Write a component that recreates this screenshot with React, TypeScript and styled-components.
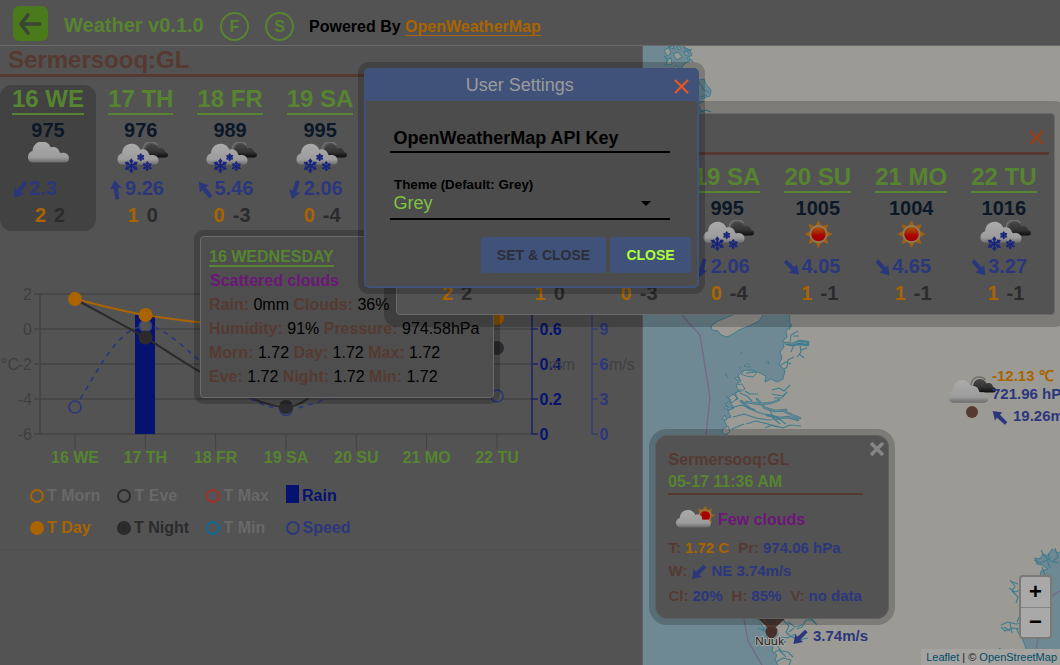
import React from 'react';
import styled, { createGlobalStyle } from 'styled-components';

const c = {
  bg: '#535353',
  line: '#6a6a6a',
  green: '#578430',
  brown: '#563a32',
  navy: '#2b377c',
  deep: '#051270',
  orange: '#a96400',
  dark: '#2b2b2d',
  purple: '#6d1679',
  blue: '#40527a',
  sea: '#6e8993',
  land: '#9c9a95',
  coast: '#3f7d8d',
};

const Global = createGlobalStyle`
  * { box-sizing: border-box; }
  body { margin: 0; background: ${c.bg}; overflow: hidden; font-family: "Liberation Sans", Arial, sans-serif; }
`;

const Page = styled.div`
  position: relative;
  width: 1060px;
  height: 665px;
  display: flex;
  flex-direction: column;
  overflow: hidden;
`;
const Header = styled.header`
  height: 46px;
  flex: none;
  display: flex;
  align-items: center;
  padding: 2px 12px 0 13px;
  border-bottom: 1px solid ${c.line};
  font-weight: bold;
`;
const BackButton = styled.div`
  width: 35px;
  height: 35px;
  border-radius: 6px;
  background: #4b7a1c;
  margin-right: 16px;
  svg { display: block; }
`;
const Brand = styled.div`
  font-size: 20px;
  line-height: 24px;
  padding-top: 2px;
  color: ${c.green};
  width: 156px;
`;
const RoundButton = styled.div`
  width: 29px;
  height: 29px;
  margin: 6px 16px 0 0;
  border: 2px solid ${c.green};
  border-radius: 50%;
  color: ${c.green};
  font-size: 16px;
  line-height: 25px;
  text-align: center;
`;
const Powered = styled.div`
  font-size: 16px;
  line-height: 20px;
  padding-top: 7px;
  margin-left: -1px;
  color: #000;
`;
const PoweredLink = styled.span`
  color: ${c.orange};
  border-bottom: 1px solid ${c.orange};
  line-height: 17px;
  display: inline-block;
`;
const Body = styled.main`
  flex: 1;
  display: grid;
  grid-template-columns: 643px 1fr;
  min-height: 0;
`;
const Left = styled.section`
  border-right: 1px solid #606060;
  display: flex;
  flex-direction: column;
  min-width: 0;
`;
const CityTitle = styled.div`
  height: 31px;
  border-bottom: 3px solid ${c.brown};
  padding-left: 8px;
  color: ${c.brown};
  font-size: 24px;
  line-height: 28px;
  font-weight: bold;
`;
const DayRow = styled.div`
  display: flex;
  margin-top: 8px;
  flex: none;
`;
const DayCell = styled.div<{ $active?: boolean }>`
  padding: 0 12px;
  height: 146px;
  flex: none;
  display: flex;
  flex-direction: column;
  font-weight: bold;
  font-size: 20px;
  line-height: 23px;
  border-radius: 12px;
  background: ${(p) => (p.$active ? '#424242' : 'transparent')};
`;
const DayName = styled.div`
  font-size: 24px;
  line-height: 28px;
  color: ${c.green};
  border-bottom: 2px solid ${c.green};
`;
const Pressure = styled.div`
  margin-top: 4px;
  text-align: center;
  color: #0a1827;
`;
const IconBox = styled.div`
  height: 35px;
  display: flex;
  justify-content: center;
  svg { display: block; flex: none; }
`;
const Wind = styled.div`
  display: flex;
  color: ${c.navy};
  svg { flex: none; overflow: visible; }
`;
const Temps = styled.div`
  margin-top: 4px;
  padding-left: 4px;
  display: flex;
  justify-content: center;
  gap: 8px;
`;
const TempDay = styled.span`color: ${c.orange};`;
const TempNight = styled.span`color: ${c.dark};`;

const ChartArea = styled.div`
  margin-top: 5px;
  height: 314px;
  border-bottom: 1px solid #4e4e4e;
  svg { display: block; }
`;
const MapArea = styled.section`
  position: relative;
  overflow: hidden;
  background: ${c.land};
`;
const MapSvg = styled.svg`
  position: absolute;
  left: 0;
  top: 0;
`;
const StationLabel = styled.div<{ $x: number; $y: number }>`
  position: absolute;
  left: ${(p) => p.$x}px;
  top: ${(p) => p.$y}px;
  white-space: nowrap;
  font-weight: bold;
  font-size: 15px;
  line-height: 18px;
  color: ${c.navy};
`;
const StationTemp = styled.div`color: ${c.orange};`;
const StationWind = styled.div`
  display: flex;
  gap: 5px;
  margin-top: 4px;
  svg { overflow: visible; }
`;
const ZoomControl = styled.div`
  position: absolute;
  right: 8px;
  bottom: 26px;
  width: 33px;
  height: 64px;
  border: 2px solid #7b7976;
  border-radius: 4px;
  background: #a9a9a9;
`;
const ZoomButton = styled.div`
  height: 30px;
  font: bold 22px/30px "Liberation Sans", sans-serif;
  text-align: center;
  color: #000;
  & + & { border-top: 1px solid #858585; line-height: 28px; }
`;
const Attribution = styled.div`
  position: absolute;
  right: 0;
  bottom: 0;
  padding: 0 3px 0 5px;
  height: 16px;
  font-size: 11px;
  line-height: 17px;
  color: #222;
  background: #a4a3a0;
  white-space: nowrap;
  span { color: #024d69; }
`;
const Popup = styled.div`
  position: absolute;
  left: 12px;
  top: 389px;
  width: 234px;
  height: 184px;
  border-radius: 12px;
  border: 1px solid #5f5f5f;
  background: ${c.bg};
  box-shadow: 0 0 0 6px rgba(0, 0, 0, 0.2);
  padding: 13px 25px 0 12px;
  font-weight: bold;
  font-size: 15px;
  line-height: 18px;
  color: ${c.brown};
  white-space: nowrap;
`;
const PopupClose = styled.svg`
  position: absolute;
  right: 3px;
  top: 5px;
`;
const PopupTitle = styled.div`
  font-size: 16px;
  line-height: 22px;
  padding-left: 0.5px;
`;
const PopupTime = styled.div`
  font-size: 16px;
  line-height: 22px;
  height: 24px;
  color: ${c.green};
  border-bottom: 2px solid ${c.brown};
`;
const PopupSky = styled.div`
  display: flex;
  align-items: center;
  height: 35px;
  margin: 7px 0 2px;
  padding-left: 6px;
  gap: 2px;
  font-size: 16px;
  color: ${c.purple};
`;
const PopupLine = styled.div<{ $h: number }>`
  display: flex;
  height: ${(p) => p.$h}px;
  padding-left: 0.5px;
  gap: 4px;
  svg { overflow: visible; }
`;
const Val = styled.span<{ $warm?: boolean }>`
  color: ${(p) => (p.$warm ? c.orange : c.navy)};
  margin-right: 5px;
`;

const Tooltip = styled.div`
  position: absolute;
  left: 200px;
  top: 236px;
  width: 294px;
  height: 162px;
  border: 1px solid ${c.line};
  border-radius: 4px;
  background: #4e4e4e;
  box-shadow: 0 0 0 6px rgba(0, 0, 0, 0.2);
  padding: 9px 0 0 8px;
  font-size: 16px;
  line-height: 24px;
  color: #000;
  white-space: nowrap;
  b { color: ${c.brown}; }
`;
const TooltipTitle = styled.div`
  width: fit-content;
  height: 21px;
  line-height: 21px;
  font-weight: bold;
  color: ${c.green};
  border-bottom: 2px solid ${c.green};
`;
const TooltipSky = styled.div`
  padding: 2px 0 0 1px;
  height: 26px;
  font-weight: bold;
  color: ${c.purple};
`;

const Panel = styled.div`
  position: absolute;
  left: 396px;
  top: 113px;
  width: 659px;
  height: 202px;
  border: 1px solid ${c.line};
  border-radius: 4px;
  background: ${c.bg};
  box-shadow: 0 0 0 12px rgba(0, 0, 0, 0.2);
  padding: 10px 5px 0 10px;
`;
const PanelClose = styled.svg`
  position: absolute;
  right: 10px;
  top: 15.500px;
`;

const Dialog = styled.div`
  position: absolute;
  left: 364px;
  top: 68px;
  width: 335px;
  height: 220px;
  border: 2px solid ${c.blue};
  border-radius: 5px;
  background: #4c4c4c;
  box-shadow: 0 0 0 6px rgba(0, 0, 0, 0.2);
  display: flex;
  flex-direction: column;
`;
const DialogHead = styled.div`
  height: 31px;
  background: ${c.blue};
  display: flex;
  align-items: center;
  color: #9b9b9b;
  font-size: 18px;
  line-height: 28px;
  padding: 0 8.500px 0 0;
  svg { margin-top: 1px; }
`;
const DialogTitle = styled.div`
  flex: 1;
  text-align: center;
  padding-bottom: 2px;
`;
const DialogBody = styled.div`
  padding: 24px 27px 0 24px;
  flex: 1;
`;
const KeyField = styled.div`
  height: 28px;
  padding-left: 3.500px;
  border-bottom: 2px solid #000;
  font-size: 18px;
  line-height: 26px;
  font-weight: bold;
`;
const SelectLabel = styled.div`
  margin-top: 24px;
  padding-left: 4px;
  font-size: 13.33px;
  line-height: 16px;
  font-weight: bold;
`;
const SelectBox = styled.div`
  height: 27px;
  padding: 0 19px 5px 3.500px;
  border-bottom: 2px solid #000;
  display: flex;
  align-items: center;
  justify-content: space-between;
  font-size: 18px;
  line-height: 20px;
  color: #7fc241;
`;
const Caret = styled.span`
  border: 5px solid transparent;
  border-top-color: #000;
  border-bottom: 0;
`;
const DialogActions = styled.div`
  display: flex;
  justify-content: flex-end;
  gap: 4px;
  padding: 0 6px 13px 0;
`;
const Button = styled.div<{ $w: number; $on?: boolean }>`
  width: ${(p) => p.$w}px;
  height: 36px;
  border-radius: 2px;
  background: ${c.blue};
  color: ${(p) => (p.$on ? '#adff2f' : '#2b2f38')};
  font-weight: bold;
  font-size: 14px;
  line-height: 36px;
  text-align: center;
`;

const Arrow = ({ dir, w = 17, h = 23, scale = 1 }: { dir: number; w?: number; h?: number; scale?: number }) => (
  <svg width={w} height={h} viewBox={`${-w / 2} ${-h / 2} ${w} ${h}`}>
    <path
      transform={`translate(-0.500 1.300) rotate(${dir}) scale(${scale})`}
      d="M0-9.800L5.800-1.200L2.200-1.500L1.900 9.500H-1.900L-2.200-1.500L-5.800-1.200Z"
      fill={c.navy}
    />
  </svg>
);

const IconDefs = () => (
  <svg width="0" height="0" style={{ position: 'absolute' }}>
    <defs>
      <linearGradient id="cloud" x1="0" y1="0" x2="0" y2="1">
        <stop offset="0" stopColor="#aaaaaa" />
        <stop offset="0.75" stopColor="#9c9c9c" />
        <stop offset="1" stopColor="#6b6b6b" />
      </linearGradient>
      <linearGradient id="night" x1="0" y1="0" x2="0" y2="1">
        <stop offset="0" stopColor="#474747" />
        <stop offset="0.6" stopColor="#333" />
        <stop offset="1" stopColor="#0c0c0c" />
      </linearGradient>
      <linearGradient id="core" x1="0" y1="0" x2="0" y2="1">
        <stop offset="0" stopColor="#a85a08" />
        <stop offset="0.45" stopColor="#a51f05" />
        <stop offset="0.6" stopColor="#aa0303" />
        <stop offset="1" stopColor="#a00000" />
      </linearGradient>
    </defs>
  </svg>
);

const cloudPath =
  'M5 21C1.500 21 0 18.500 0 15.500C0 12 2 10 4.500 9.500C5 3.500 9 0 14 0C18.500 0 21.500 2.500 22.800 6C27 4.500 31 7 31.500 10.500C32 11 32.500 11.400 33 11.500C37.500 10.500 41 13 41 16.500C41 19.500 39.500 21 36.500 21Z';

const Flake = ({ x, y, r, w }: { x: number; y: number; r: number; w: number }) => (
  <g transform={`translate(${x} ${y})`} stroke="#1a257c" strokeWidth={w} strokeLinecap="round">
    {[0, 60, 120].map((a) => (
      <path
        key={a}
        transform={`rotate(${a})`}
        fill="none"
        d={`M0 ${-r}V${r}M${-r * 0.18} ${-r * 0.75}L0 ${-r * 0.5}L${r * 0.18} ${-r * 0.75}M${-r * 0.18} ${r * 0.75}L0 ${r * 0.5}L${r * 0.18} ${r * 0.75}`}
      />
    ))}
  </g>
);

const Sun = ({ x, y, s = 1 }: { x: number; y: number; s?: number }) => (
  <g transform={`translate(${x} ${y}) scale(${s})`}>
    {[0, 45, 90, 135, 180, 225, 270, 315].map((a) => (
      <path key={a} transform={`rotate(${a})`} d="M-2.900-8.500L0-14L2.900-8.500Z" fill="#a06010" />
    ))}
    <circle r="9.200" fill="#93703a" />
    <circle r="8.500" fill="#8f806a" />
    <circle r="7.300" fill="url(#core)" />
  </g>
);

const NightCloud = ({ x, y }: { x: number; y: number }) => (
  <g transform={`translate(${x} ${y})`}>
    <path d="M0 8C0 3 4 0 8 0C11 0 13 1 14.500 3" fill="none" stroke="#707070" strokeWidth="1.500" />
    <path
      d="M3 14C1 10 2 3 8 2C12 1.500 14.500 4 15.500 6.500C19 5 22 7.500 22 10C26 10.500 26 15.500 22 15.500H6Z"
      fill="url(#night)"
    />
  </g>
);

type Sky = 'cloud' | 'snow' | 'sun';
const SkyIcon = ({ kind }: { kind: Sky }) => (
  <svg width="58" height="35" viewBox="-29 0 58 35">
    {kind === 'cloud' && <path transform="translate(-20 -0.500)" d={cloudPath} fill="url(#cloud)" />}
    {kind === 'snow' && (
      <>
        <NightCloud x={2} y={0} />
        <path transform="translate(-23.500 1.800)" d={cloudPath} fill="url(#cloud)" />
        <Flake x={-9.7} y={23.8} r={6.4} w={1.8} />
        <Flake x={-0.3} y={15.3} r={3.2} w={1.5} />
        <Flake x={6.3} y={24.2} r={4.3} w={1.5} />
      </>
    )}
    {kind === 'sun' && <Sun x={0.5} y={14} />}
  </svg>
);

interface Day { name: string; p: number; sky: Sky; dir: number; wind: string; hi: string; lo: string }
const days: Day[] = [
  { name: '16 WE', p: 975, sky: 'cloud', dir: 217, wind: '2.3', hi: '2', lo: '2' },
  { name: '17 TH', p: 976, sky: 'snow', dir: -8, wind: '9.26', hi: '1', lo: '0' },
  { name: '18 FR', p: 989, sky: 'snow', dir: -38, wind: '5.46', hi: '0', lo: '-3' },
  { name: '19 SA', p: 995, sky: 'snow', dir: 197, wind: '2.06', hi: '0', lo: '-4' },
  { name: '20 SU', p: 1005, sky: 'sun', dir: 134, wind: '4.05', hi: '1', lo: '-1' },
  { name: '21 MO', p: 1004, sky: 'sun', dir: 140, wind: '4.65', hi: '1', lo: '-1' },
  { name: '22 TU', p: 1016, sky: 'snow', dir: 140, wind: '3.27', hi: '1', lo: '-1' },
];

const Days = ({ items, active }: { items: Day[]; active?: number }) => (
  <DayRow>
    {items.map((d, i) => (
      <DayCell key={d.name} $active={i === active}>
        <DayName>{d.name}</DayName>
        <Pressure>{d.p}</Pressure>
        <IconBox><SkyIcon kind={d.sky} /></IconBox>
        <Wind><Arrow dir={d.dir} />{d.wind}</Wind>
        <Temps><TempDay>{d.hi}</TempDay><TempNight>{d.lo}</TempNight></Temps>
      </DayCell>
    ))}
  </DayRow>
);

const xs = [75, 145.3, 215.6, 286, 356.3, 426.6, 497];

const Chart = () => (
  <svg width="642" height="313" viewBox="0 236 642 313" fontSize="16">
    <g stroke="#434343" strokeWidth="1.500">
      {[294, 329, 364, 399, 434].map((y) => <path key={y} d={`M34 ${y}H532`} />)}
      <path d="M40 294V434" />
      {xs.map((x) => <path key={x} d={`M${x} 434V450`} strokeWidth="1" />)}
    </g>
    <g fill="#3f3f3f" textAnchor="end">
      {['2', '0', '-2', '-4', '-6'].map((t, i) => <text key={t} x="32" y={299.5 + i * 35}>{t}</text>)}
      <text x="19" y="370">°C</text>
    </g>
    <g fill={c.green} fontWeight="bold" textAnchor="middle">
      {days.map((d, i) => <text key={d.name} x={xs[i]} y="463">{d.name}</text>)}
    </g>
    <rect x="135" y="315" width="20" height="119" fill={c.deep} />
    <g fill="none" strokeWidth="2">
      <path d="M75 299C100 305 120 311 145 315C170 319 200 323 230 325C320 331 420 322 497 318" stroke={c.orange} />
      <path d="M75 299L145 337C180 360 250 407 286 407C312 407 330 370 360 355C420 335 440 352 497 348" stroke={c.dark} />
      <path d="M75 407C95 378 115 328 145 326C175 322 230 409 286 409C340 409 430 320 497 396" stroke={c.navy} strokeDasharray="5 5" strokeWidth="1.700" />
    </g>
    <g fill={c.bg} stroke={c.navy} strokeWidth="1.700">
      <circle cx="75" cy="407" r="6" />
      <circle cx="286" cy="409.500" r="6" />
      <circle cx="497" cy="396" r="6" />
      <circle cx="145.500" cy="326" r="6" stroke="#34437f" />
    </g>
    <g fill={c.dark}>
      <circle cx="145.500" cy="337.500" r="7" />
      <circle cx="286" cy="407" r="7" />
      <circle cx="497" cy="348" r="7" />
    </g>
    <g fill={c.orange}>
      <circle cx="75" cy="299" r="7" />
      <circle cx="145.500" cy="315" r="7" />
      <circle cx="497" cy="318" r="7" />
    </g>
    <path d="M538 329H532M538 364H532M538 399H532M538 434H532V294" fill="none" stroke="#1c2463" strokeWidth="1.500" />
    <path d="M598 329H592M598 364H592M598 399H592M598 434H592V294" fill="none" stroke="#343d70" strokeWidth="1.500" />
    <g fontWeight="bold" fill={c.deep}>
      {['0.6', '0.4', '0.2', '0'].map((t, i) => <text key={t} x="539.500" y={335 + i * 35}>{t}</text>)}
    </g>
    <g fontWeight="bold" fill={c.navy}>
      {['9', '6', '3', '0'].map((t, i) => <text key={t} x="599.500" y={335 + i * 35}>{t}</text>)}
    </g>
    <text x="548.500" y="370" fill="#414141">mm</text>
    <text x="609" y="370" fill="#414141">m/s</text>
    <g fontWeight="bold">
      <g strokeWidth="2" fill="none">
        <circle cx="37" cy="496" r="6" stroke={c.orange} />
        <circle cx="124" cy="496" r="6" stroke={c.dark} />
        <circle cx="213" cy="496" r="6" stroke="#a0302a" />
        <circle cx="213" cy="528" r="6" stroke="#106c94" />
        <circle cx="293" cy="528" r="6" stroke={c.navy} />
      </g>
      <circle cx="37" cy="528" r="7" fill={c.orange} />
      <circle cx="124" cy="528" r="7" fill={c.dark} />
      <rect x="286" y="485" width="13" height="18" fill={c.deep} />
      <g fill="#686868">
        <text x="47" y="501">T Morn</text>
        <text x="134.500" y="501">T Eve</text>
        <text x="223.500" y="501">T Max</text>
        <text x="223.500" y="533">T Min</text>
      </g>
      <text x="302" y="501" fill={c.deep}>Rain</text>
      <text x="47" y="533" fill={c.orange}>T Day</text>
      <text x="134" y="533" fill={c.dark}>T Night</text>
      <text x="302.500" y="533" fill={c.navy}>Speed</text>
    </g>
  </svg>
);

const MapDrawing = () => (
  <MapSvg width="417" height="619" viewBox="643 46 417 619">
    <g fill={c.sea} stroke={c.coast} strokeWidth="1" strokeLinejoin="round">
      <path d="M640 40H682L684 47L690 50L692 55L687 58L690 61L684 64L681 69L676 66L672 70L674 76L686 78L693 76L699 80L704 79L706 84L711 90L710 96L704 98L698 103L700 109L704 112V250L780 270L789 300L790 326L786 331L787 337L783 341L784 347L780 352L782 358L779 364L785 371L783 379L777 382L771 379L765 382L766 376L758 372L752 370L742 371L738 376L741 381L736 385L741 390L735 393L738 399L730 402L734 408L728 411L731 417L724 419L727 427L722 431L729 436L740 450V600L757 619L762 625L766 632L768 641L773 646L772 651L777 655L775 660L780 668H640Z" />
      <path d="M1064 549L1058 553L1052 549L1048 556L1043 554L1040 559L1035 558L1037 564L1042 565L1048 569L1041 571L1040 577L1046 580V630L1030 634L1022 638L1026 648L1024 670H1064Z" />
      <path d="M753 314L760 318L768 314L776 318L786 314L788 325L770 330Z" stroke="none" />
    </g>
    <path d="M711 326L718 321L740 312H765L759 321L749 326L739 330L733 334L727 337L721 335L718 331L712 330Z" fill={c.land} stroke={c.coast} />
    <g fill={c.land} stroke={c.coast} strokeWidth="1">
      <path d="M664 50L669 48L671 53L667 56ZM673 54L678 52L682 57L677 60ZM666 60L671 58L672 64L667 65ZM676 45L681 48L679 50ZM684 51L689 53L686 56ZM668 47L673 46L674 49Z" />
      <path d="M741 374L745 370L752 371L757 373L753 377L746 376ZM736 385L742 384L745 389L739 392ZM728 398L733 394L737 398L732 403ZM722 419L725 415L727 420ZM722 430L728 426L730 432L724 435ZM766 362L768 361L769 364ZM735 378L739 377L738 381ZM724 408L727 406L728 410ZM744 366L748 364L750 367Z" strokeWidth="0.900" />
    </g>
    <g fill="none" stroke={c.coast} strokeWidth="2.400" strokeLinejoin="round" strokeLinecap="round">
      <path d="M785 343L793 344L799 341L808 342V345L800 344L792 345L786 344" />
      <path d="M741 401L749 408L754 410M757 399L765 408L775 411L786 410M746 402L760 404L771 403L779 400M784 411L792 415L800 418M767 415L780 418L788 417L798 420" />
    </g>
    <g fill="none" stroke={c.sea} strokeWidth="1" strokeLinejoin="round" strokeLinecap="round">
      <path d="M780 343L793 344L799 342L807 343" />
      <path d="M741 401L749 408L754 410M757 399L765 408L775 411L786 410M746 402L760 404L771 403L779 400M784 411L792 415L800 418M767 415L780 418L788 417L798 420" />
    </g>
    <g fill="none" stroke={c.coast} strokeWidth="1.100" strokeLinejoin="round">
      <path d="M790 342L791 335L798 331M793 336L799 336M794 345L791 352M800 345L801 352L797 357M801 350L807 348M799 354L804 358M789 330L792 324M781 365L786 362L791 364M783 370L787 367L788 360L794 357" />
      <path d="M772 390L779 388L784 391L790 385M772 394L783 396L787 392L782 398L774 398" />
      <path d="M740 393L747 396L752 401M731 408L741 405L750 408L757 412L767 415L779 418M733 417L744 414L756 418L768 420L779 419L786 424M746 424L756 421L768 424L777 427M765 428L772 425L783 428L790 425L801 426M732 429L744 424M770 410L773 418L780 424M745 391L750 394L758 394" />
      <path d="M746 373L757 372M741 389L735 394M739 367L741 370M725 373L728 378M741 352L742 354M726 396L731 400L725 404L729 408" strokeWidth="1" />
      <path d="M788 622L795 627L802 625M783 620L789 626L786 632L790 636L799 640L808 638M789 632L794 628M774 641L782 637L787 638L796 634M797 629L802 627L806 620L813 620L817 625M764 620L768 626L763 629L769 636M786 641L780 645L776 643M770 642L777 645L781 651L788 652L793 657M773 653L779 650L786 657M776 662L783 658L791 660L789 665M758 628L765 631M779 633L774 639M809 617L816 624" />
      <path d="M1055 548L1058 557L1052 562L1044 556L1041 550M1034 560L1041 563L1047 560L1050 568M1048 553L1050 561L1059 563M1042 567L1045 575M1010 580L1015 586L1012 591L1018 597L1016 603M1009 588L1015 592L1020 590M1010 581L1018 584M1001 625L1008 622L1016 624L1023 623L1020 629L1013 628L1005 631L1001 627M1010 623L1012 633M1017 622L1020 615M1016 628L1019 634M1004 627L1010 631M999 648L1004 652M998 658L1010 657L1016 650" />
      <path d="M699 82L704 90L709 92M700 97L707 95M698 104L704 101M700 112L706 110L711 112M689 58L693 62M664 56L668 60L665 66M684 47L687 51L692 49" />
    </g>
    <g fill="none" stroke="#77668a" strokeWidth="1.300">
      <path d="M680 312L688 322L700 335L710 398L706 434V520L744 619L748 641L762 665" />
      <path d="M1040 625L1038 638L1036 652M1050 597L1060 591" />
    </g>
    <circle cx="972" cy="412" r="6" fill={c.brown} />
    <g transform="translate(972 376)"><NightCloud x={-1} y={1} /></g>
    <path transform="translate(948.500 380) scale(0.970 1.080)" d={cloudPath} fill="url(#cloud)" />
    <path d="M756 617H787L771.500 631Z" fill="#403a38" />
    <path d="M761 617L771.500 628L782 617" fill="none" stroke={c.brown} strokeWidth="2.500" />
    <path d="M771.500 639C767 637 765.500 634 765.500 630C767 626 770 627 771.500 628C773 627 776 626 777.500 630C777.500 634 776 637 771.500 639Z" fill="#48302a" />
    <text x="755" y="645" fontFamily="Noto Sans, sans-serif" fontSize="11.500" fill="#202020" stroke="#a8a6a2" strokeWidth="2" paintOrder="stroke" strokeLinejoin="round">Nuuk</text>
  </MapSvg>
);

const Cross = ({ color }: { color: string }) => <path d="M1 1L14 14M14 1L1 14" stroke={color} strokeWidth="2" fill="none" />;

export default function App() {
  return (
    <Page>
      <Global />
      <IconDefs />
      <Header>
        <BackButton>
          <svg width="35" height="35" viewBox="0 0 35 35" fill="none" stroke="#3b4537" strokeWidth="3.600" strokeLinecap="round" strokeLinejoin="round">
            <path d="M26.500 18H8M15 9L8 18L15 27" />
          </svg>
        </BackButton>
        <Brand>Weather v0.1.0</Brand>
        <RoundButton>F</RoundButton>
        <RoundButton>S</RoundButton>
        <Powered>Powered By <PoweredLink>OpenWeatherMap</PoweredLink></Powered>
      </Header>
      <Body>
        <Left>
          <CityTitle>Sermersooq:GL</CityTitle>
          <Days items={days.slice(0, 4)} active={0} />
          <ChartArea><Chart /></ChartArea>
        </Left>
        <MapArea>
          <MapDrawing />
          <StationLabel $x={349} $y={321}>
            <StationTemp>-12.13 ℃</StationTemp>
            <div>721.96 hPa</div>
            <StationWind><Arrow dir={-47} w={16} h={18} scale={0.95} />19.26m/s</StationWind>
          </StationLabel>
          <StationLabel $x={150} $y={577}>
            <StationWind><Arrow dir={225} w={15} h={18} scale={0.95} />3.74m/s</StationWind>
          </StationLabel>
          <Popup>
            <PopupClose width="16" height="16" viewBox="0 0 16 16">
              <path d="M2 2L14 14M14 2L2 14" stroke="#858585" strokeWidth="3.500" />
            </PopupClose>
            <PopupTitle>Sermersooq:GL</PopupTitle>
            <PopupTime>05-17 11:36 AM</PopupTime>
            <PopupSky>
              <svg width="42" height="30" viewBox="0 0 42 30">
                <Sun x={31} y={10.5} s={0.72} />
                <path transform="translate(2 5) scale(0.850 0.830)" d={cloudPath} fill="url(#cloud)" />
                <path d="M28 8A4.500 4.500 0 0 1 35.500 12.500L33 14.500H28Z" fill="#a80303" />
              </svg>
              Few clouds
            </PopupSky>
            <PopupLine $h={23}>T: <Val $warm>1.72 C</Val> Pr: <Val>974.06 hPa</Val></PopupLine>
            <PopupLine $h={25}>W: <Arrow dir={225} w={16} h={18} scale={0.95} /><Val>NE 3.74m/s</Val></PopupLine>
            <PopupLine $h={20}>Cl: <Val>20%</Val> H: <Val>85%</Val> V: <Val>no data</Val></PopupLine>
          </Popup>
          <ZoomControl><ZoomButton>+</ZoomButton><ZoomButton>−</ZoomButton></ZoomControl>
          <Attribution><span>Leaflet</span> | © <span>OpenStreetMap</span></Attribution>
        </MapArea>
      </Body>
      <Tooltip>
        <TooltipTitle>16 WEDNESDAY</TooltipTitle>
        <TooltipSky>Scattered clouds</TooltipSky>
        <div><b>Rain:</b> 0mm <b>Clouds:</b> 36%</div>
        <div><b>Humidity:</b> 91% <b>Pressure:</b> 974.58hPa</div>
        <div><b>Morn:</b> 1.72 <b>Day:</b> 1.72 <b>Max:</b> 1.72</div>
        <div><b>Eve:</b> 1.72 <b>Night:</b> 1.72 <b>Min:</b> 1.72</div>
      </Tooltip>
      <Panel>
        <CityTitle />
        <Days items={days} />
        <PanelClose width="15" height="15" viewBox="0 0 15 15"><Cross color="#a03c14" /></PanelClose>
      </Panel>
      <Dialog>
        <DialogHead>
          <DialogTitle>User Settings</DialogTitle>
          <svg width="15" height="15" viewBox="0 0 15 15"><Cross color="#ee571c" /></svg>
        </DialogHead>
        <DialogBody>
          <KeyField>OpenWeatherMap API Key</KeyField>
          <SelectLabel>Theme (Default: Grey)</SelectLabel>
          <SelectBox>Grey<Caret /></SelectBox>
        </DialogBody>
        <DialogActions>
          <Button $w={125}>SET &amp; CLOSE</Button>
          <Button $w={81} $on>CLOSE</Button>
        </DialogActions>
      </Dialog>
    </Page>
  );
}
